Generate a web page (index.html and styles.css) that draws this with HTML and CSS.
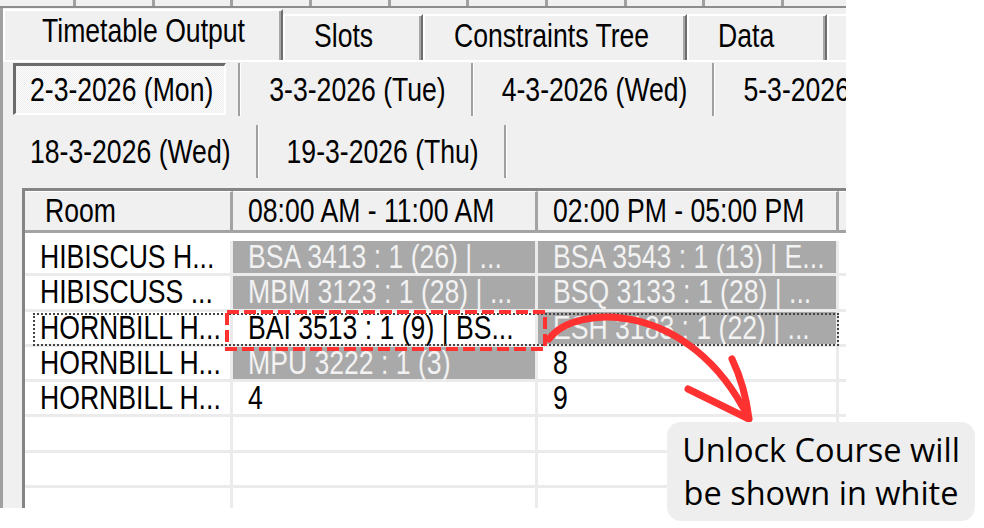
FILE: index.html
```html
<!DOCTYPE html>
<html>
<head lang="en">
    <meta charset="UTF-8">
    <title>Timetable Output</title>
    <link rel="stylesheet" href="styles.css">
</head>
<body>

<div class="app">
    <div class="strip">
        <span></span><span></span><span></span><span></span><span></span><span></span>
        <span></span><span></span><span></span><span></span><span></span>
    </div>
    <div class="main">
        <div class="tabs">
            <div class="tab active"><span class="t">Timetable Output</span></div>
            <div class="tab"><span class="t">Slots</span></div>
            <div class="tab"><span class="t">Constraints Tree</span></div>
            <div class="tab"><span class="t">Data</span></div>
            <div class="tab"></div>
        </div>
        <div class="page">
            <div class="days">
                <div class="day"><div class="btn on"><span class="t">2-3-2026 (Mon)</span></div></div>
                <div class="day"><div class="btn"><span class="t">3-3-2026 (Tue)</span></div></div>
                <div class="day"><div class="btn"><span class="t">4-3-2026 (Wed)</span></div></div>
                <div class="day"><div class="btn"><span class="t">5-3-2026 (Thu)</span></div></div>
            </div>
            <div class="days">
                <div class="day"><div class="btn"><span class="t">18-3-2026 (Wed)</span></div></div>
                <div class="day"><div class="btn"><span class="t">19-3-2026 (Thu)</span></div></div>
            </div>

            <div class="grid">
                <div class="hd">
                    <div class="c"><span class="t">Room</span></div>
                    <div class="c"><span class="t">08:00 AM - 11:00 AM</span></div>
                    <div class="c"><span class="t">02:00 PM - 05:00 PM</span></div>
                    <div class="c"></div>
                </div>
                <div class="rows">
                    <div class="row">
                        <div class="c"><span class="t">HIBISCUS H...</span></div>
                        <div class="c lock"><span class="t">BSA 3413 : 1 (26) | ...</span></div>
                        <div class="c lock"><span class="t">BSA 3543 : 1 (13) | E...</span></div>
                        <div class="c"></div>
                    </div>
                    <div class="row">
                        <div class="c"><span class="t">HIBISCUSS ...</span></div>
                        <div class="c lock"><span class="t">MBM 3123 : 1 (28) | ...</span></div>
                        <div class="c lock"><span class="t">BSQ 3133 : 1 (28) | ...</span></div>
                        <div class="c"></div>
                    </div>
                    <div class="row focus">
                        <div class="c"><span class="t">HORNBILL H...</span></div>
                        <div class="c"><span class="t">BAI 3513 : 1 (9) | BS...</span></div>
                        <div class="c lock"><span class="t">ESH 3183 : 1 (22) | ...</span></div>
                        <div class="c"></div>
                    </div>
                    <div class="row">
                        <div class="c"><span class="t">HORNBILL H...</span></div>
                        <div class="c lock"><span class="t">MPU 3222 : 1 (3)</span></div>
                        <div class="c"><span class="t">8</span></div>
                        <div class="c"></div>
                    </div>
                    <div class="row">
                        <div class="c"><span class="t">HORNBILL H...</span></div>
                        <div class="c"><span class="t">4</span></div>
                        <div class="c"><span class="t">9</span></div>
                        <div class="c"></div>
                    </div>
                    <div class="row"><div class="c"></div><div class="c"></div><div class="c"></div><div class="c"></div></div>
                    <div class="row"><div class="c"></div><div class="c"></div><div class="c"></div><div class="c"></div></div>
                    <div class="row"><div class="c"></div><div class="c"></div><div class="c"></div><div class="c"></div></div>
                </div>
            </div>
        </div>
    </div>
</div>

<svg class="marks" width="984" height="528" viewBox="0 0 984 528">
    <rect x="227" y="312" width="318" height="37" fill="none" stroke="#ff3131" stroke-width="4" stroke-dasharray="12 5"/>
    <path d="M549 339 C575 303 690 300 748 417" fill="none" stroke="#ff3131" stroke-width="7" stroke-linecap="round"/>
    <path d="M688 389 L749 419 M732 359 Q745 386 749 419" fill="none" stroke="#ff3131" stroke-width="7" stroke-linecap="round" stroke-linejoin="round"/>
</svg>

<div class="note">Unlock Course will<br>be shown in white</div>

</body>
</html>
```

FILE: styles.css
```css
body{
    margin: 0;
    background: #fff;
    font-family: "Liberation Sans", Arial, sans-serif;
    font-size: 26.6px;
    color: #000;
}
.t{
    display: inline-block;
    transform: scaleY(1.24);
}
.app{
    width: 846px;
    height: 508px;
    background: #f0f0f0;
    overflow: hidden;
}

/* cut-off strip of the outer tab row */
.strip{
    display: flex;
    height: 6px;
    border-bottom: 2px solid #8c8c8c;
}
.strip span{
    flex: 0 0 78.67px;
    box-sizing: border-box;
    border-right: 3px solid #a0a0a0;
}
.strip span:first-child{
    flex-basis: 76px;
}

.main{
    border-left: 3px solid #a0a0a0;
    height: 500px;
}

/* tab headers */
.tabs{
    display: flex;
    align-items: flex-end;
    height: 52px;
    overflow: hidden;
}
.tab{
    flex: none;
    box-sizing: border-box;
    height: 46px;
    min-width: 140px;
    padding: 0 36px 0 29px;
    border-top: 2px solid #fff;
    border-left: 2px solid #fff;
    border-right: 2px solid #6e6e6e;
    box-shadow: inset -2px 0 #a8a8a8;
    line-height: 41px;
    white-space: nowrap;
}
.tab.active{
    height: 53px;
    padding-left: 37px;
    margin-bottom: -2px;
    position: relative;
    z-index: 1;
    background: #f0f0f0;
}
.tab:last-child{
    flex: 1 1 0;
    min-width: 0;
    border-right: 0;
    box-shadow: none;
}

.page{
    border-top: 2px solid #fff;
}

/* day buttons */
.days{
    display: flex;
    height: 53px;
    margin: 1px 0 0 10px;
    white-space: nowrap;
}
.days + .days{
    margin-top: 9px;
}
.day{
    display: flex;
    flex: none;
}
.day::after{
    content: "";
    width: 2px;
    background: #a0a0a0;
    border-right: 1px solid #fff;
    margin: 0 11px 0 12px;
}
.btn{
    box-sizing: border-box;
    border-style: solid;
    border-color: transparent;
    border-width: 3px 2px 2px 3px;
    padding: 0 11px 0 14px;
    line-height: 48px;
}
.btn.on{
    border-color: #6b6b6b #fff #fff #6b6b6b;
    background: repeating-conic-gradient(#fdfdfd 0 25%, #ededed 0 50%) 0 0 / 2px 2px;
    height: 52px;
}

/* timetable grid */
.grid{
    margin: 10px 0 0 19px;
    border-top: 3px solid #858585;
    border-left: 3px solid #858585;
    background: #fff;
}
.hd, .row{
    display: grid;
    grid-template-columns: 208px 305px 301px 1fr;
}
.hd{
    height: 42px;
    background: #fff;
}
.hd .c{
    box-sizing: border-box;
    background: #f0f0f0;
    border-top: 1px solid #fff;
    border-right: 3px solid #a3a3a3;
    border-bottom: 3px solid #a3a3a3;
    padding-left: 15px;
    line-height: 38px;
    white-space: nowrap;
}
.hd .c:first-child{
    padding-left: 20px;
}
.rows{
    padding-top: 8px;
}
.row{
    height: 35.3px;
    position: relative;
}
.row .c{
    box-sizing: border-box;
    border-right: 3px solid #ebebeb;
    border-bottom: 3px solid #ebebeb;
    padding-left: 15px;
    line-height: 32px;
    white-space: nowrap;
}
.row .c.lock{
    background: #a9a9a9;
    color: #f2f2f2;
}
.row.focus::after{
    content: "";
    position: absolute;
    left: 8px;
    top: 1px;
    width: 806px;
    height: 33px;
    box-sizing: border-box;
    border: 2px dotted #444;
}

/* annotation */
.marks{
    position: absolute;
    left: 0;
    top: 0;
    pointer-events: none;
}
.note{
    position: absolute;
    left: 667px;
    top: 422px;
    width: 308px;
    height: 99px;
    box-sizing: border-box;
    padding-top: 6px;
    background: #eeeeee;
    border-radius: 14px;
    font-family: "Open Sans", "Liberation Sans", sans-serif;
    font-size: 32.5px;
    line-height: 43px;
    text-align: center;
    color: #000;
}
```
